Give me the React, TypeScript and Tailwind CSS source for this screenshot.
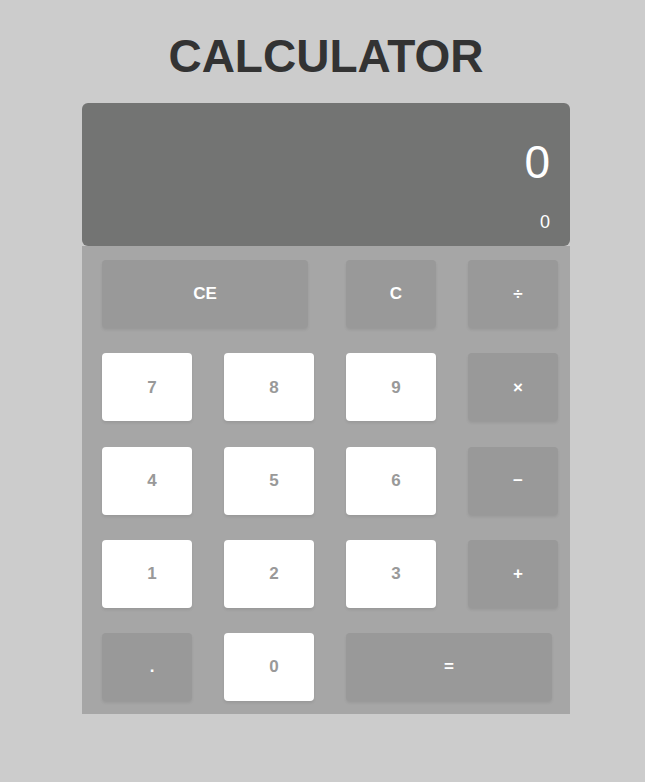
const keys = [
  { label: 'CE', kind: 'op', wide: true },
  { label: 'C', kind: 'op' },
  { label: '÷', kind: 'op' },
  { label: '7', kind: 'num' },
  { label: '8', kind: 'num' },
  { label: '9', kind: 'num' },
  { label: '×', kind: 'op' },
  { label: '4', kind: 'num' },
  { label: '5', kind: 'num' },
  { label: '6', kind: 'num' },
  { label: '−', kind: 'op' },
  { label: '1', kind: 'num' },
  { label: '2', kind: 'num' },
  { label: '3', kind: 'num' },
  { label: '+', kind: 'op' },
  { label: '.', kind: 'op' },
  { label: '0', kind: 'num' },
  { label: '=', kind: 'op', wide: true },
]

const App = () => {
  return (
    <div className="min-h-[782px] bg-[#cccccc] flex flex-col items-center pl-[7px] font-['Liberation_Sans',Arial,sans-serif]">
      <h1 className="text-[46px] leading-none font-bold text-[#333333] mt-[33px] mb-[24px]">
        CALCULATOR
      </h1>
      <div className="w-[488px]">
        <div className="h-[143px] bg-[#737473] rounded-[6px] flex flex-col items-end pr-5 pt-[36px] text-white">
          <div className="text-[46px] leading-[46px]">0</div>
          <div className="text-[18px] leading-[18px] mt-[28px]">0</div>
        </div>
        <div className="bg-[#a6a6a6] pl-5 pt-[14px] pb-[13px]">
          <div className="grid grid-cols-[repeat(4,90px)] gap-x-[32px] gap-y-[25.25px]">
            {keys.map((k) => (
              <button
                key={k.label}
                className={
                  'h-[68px] rounded-[4px] text-[17px] font-bold flex items-center justify-center shadow-[0_2px_3px_rgba(0,0,0,0.08)] ' +
                  (k.wide ? 'col-span-2 w-[206px] ' : 'w-[90px] pl-[10px] ') +
                  (k.kind === 'num' ? 'bg-white text-[#999999]' : 'bg-[#999999] text-white')
                }
              >
                {k.label}
              </button>
            ))}
          </div>
        </div>
      </div>
    </div>
  )
}

export default App
